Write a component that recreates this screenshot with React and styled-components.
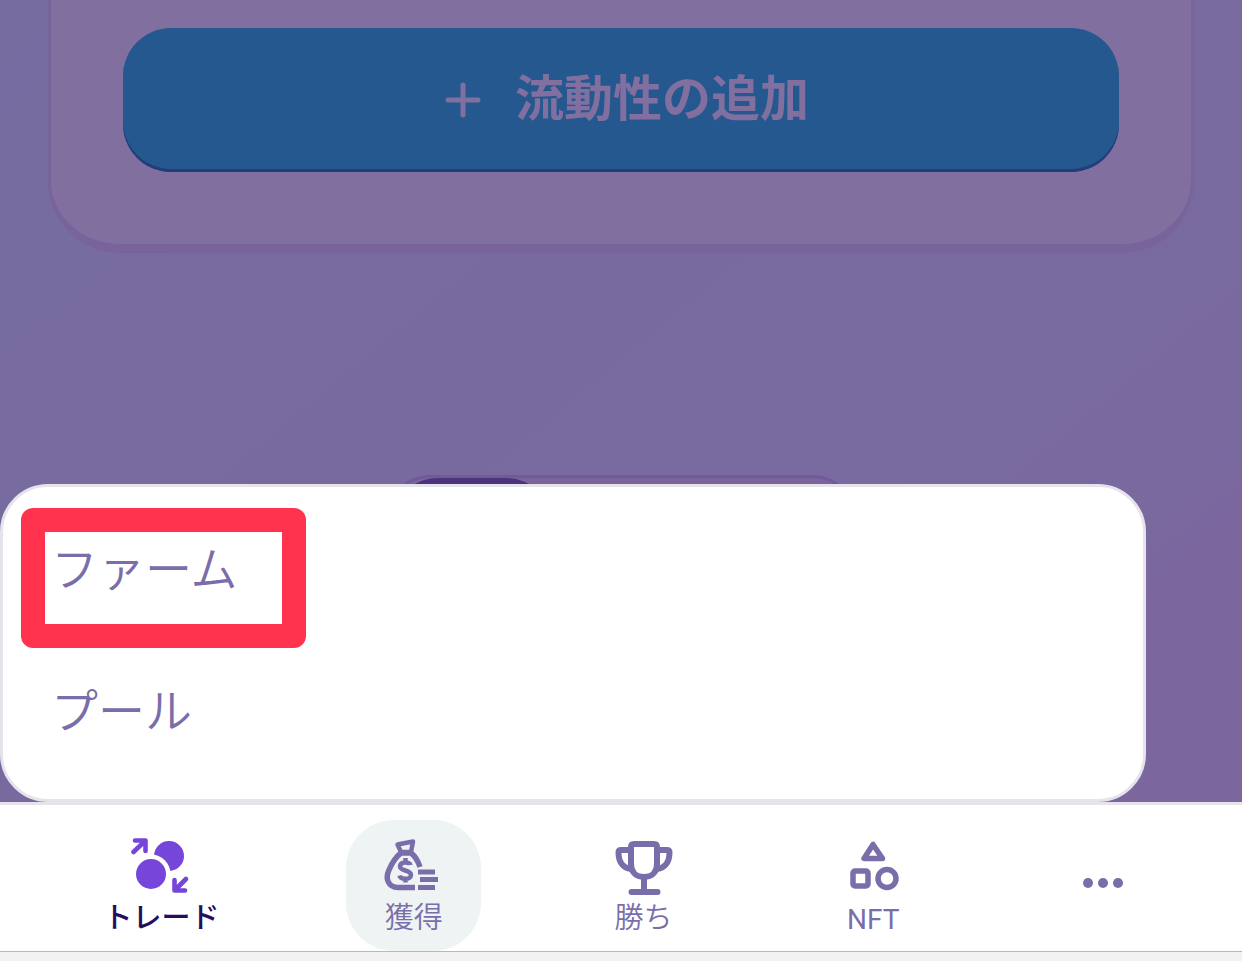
import React from 'react'
import styled, { createGlobalStyle } from 'styled-components'

const GlobalStyle = createGlobalStyle`
  * {
    box-sizing: border-box;
  }
  body {
    margin: 0;
    background: #f2f2f2;
    font-family: Roboto, 'Noto Sans CJK JP', sans-serif;
  }
`

function TradeIcon() {
  return (
    <Icon viewBox="0 0 60 60">
      <circle cx="38" cy="20" r="15" fill="currentColor" />
      <circle cx="20" cy="38" r="19.500" fill="#fff" />
      <circle cx="20" cy="38" r="15" fill="currentColor" />
      <path d="M2.500 16 14 5M4 4.500H14.500V15" fill="none" stroke="currentColor" strokeWidth="4.600" strokeLinejoin="round" strokeLinecap="round" />
      <path d="M55 43 44 54M43.500 44V54.500H54" fill="none" stroke="currentColor" strokeWidth="4.600" strokeLinejoin="round" strokeLinecap="round" />
    </Icon>
  )
}

function EarnIcon() {
  return (
    <Icon viewBox="0 0 60 60">
      <g fill="none" stroke="currentColor" strokeWidth="5.500" strokeLinejoin="round">
        <path d="M31 51.500H14C4 51.500 1 42 5 34 8 27 13 20 17 17H27C31 20 34 25 36 31" />
        <path d="M17 16 13.500 8.500 29 5.500 27 16Z" strokeWidth="4.500" />
        <path d="M26.500 29C26 25.500 16 25.500 16 30.500 16 35.500 27 33.500 27 39 27 44 16.500 44 15.500 39.500M21.500 22v5M21.500 42v4.500" strokeWidth="4.500" />
      </g>
      <path d="M34 33.500H51V38.500H34ZM36 41H54V46H36ZM34 49H51V54H34Z" fill="currentColor" />
    </Icon>
  )
}

function TrophyIcon() {
  return (
    <Icon viewBox="0 0 60 60">
      <g fill="none" stroke="currentColor" strokeWidth="6" strokeLinecap="round" strokeLinejoin="round">
        <path d="M17 11Q17 8 20 8H40Q43 8 43 11V28C43 36 38 41 30 41S17 36 17 28Z" />
        <path d="M16 14H7Q4.500 14 4.500 16.500C4.500 26 9 32 17 33M44 14H53Q55.500 14 55.500 16.500C55.500 26 51 32 43 33M30 42V55M17.500 56H43.500" />
      </g>
    </Icon>
  )
}

function NftIcon() {
  return (
    <Icon viewBox="0 0 60 60">
      <g fill="none" stroke="currentColor" strokeWidth="5.500" strokeLinejoin="round">
        <path d="M30 8.500 21 22.500H39.500Z" />
        <rect x="10" y="35" width="15" height="15" rx="2" />
        <circle cx="44" cy="42.500" r="9" />
      </g>
    </Icon>
  )
}

function MoreIcon() {
  return (
    <Icon viewBox="0 0 60 60">
      <g fill="currentColor">
        <circle cx="15" cy="30" r="5" />
        <circle cx="30" cy="30" r="5" />
        <circle cx="45" cy="30" r="5" />
      </g>
    </Icon>
  )
}

function App() {
  return (
    <Page>
      <GlobalStyle />
      <Content>
        <Card>
          <AddButton type="button">
            <Icon viewBox="0 0 60 60">
              <path d="M30 15V45M15 30H45" fill="none" stroke="currentColor" strokeWidth="5" strokeLinecap="round" />
            </Icon>
            <AddLabel>流動性の追加</AddLabel>
          </AddButton>
        </Card>
        <Toggle>
          <ToggleThumb />
        </Toggle>
        <SubMenu>
          <SubMenuLink href="#farms">
            <Marker>ファーム</Marker>
          </SubMenuLink>
          <SubMenuLink href="#pools">プール</SubMenuLink>
        </SubMenu>
      </Content>
      <BottomNav>
        <NavButton type="button" $active>
          <TradeIcon />
          <Label>トレード</Label>
        </NavButton>
        <NavButton type="button" $open>
          <EarnIcon />
          <Label>獲得</Label>
        </NavButton>
        <NavButton type="button">
          <TrophyIcon />
          <Label>勝ち</Label>
        </NavButton>
        <NavButton type="button">
          <NftIcon />
          <Label $latin>NFT</Label>
        </NavButton>
        <NavButton type="button" aria-label="More" $center>
          <MoreIcon />
        </NavButton>
      </BottomNav>
      <BrowserBar />
    </Page>
  )
}

export default App

const Page = styled.div`
  display: flex;
  flex-direction: column;
  min-height: 100vh;
`

const Content = styled.main`
  position: relative;
  flex: 1;
  display: flex;
  flex-direction: column;
  align-items: center;
  gap: 222px;
  padding: 0 48px;
  overflow: hidden;
  background: linear-gradient(140deg, #766ca0 0%, #786a9f 40%, #79699f 80%, #7b669e 84%);
`

const Card = styled.section`
  width: 100%;
  padding: 28px 72px 72px;
  border: 3px solid #79639b;
  border-top: 0;
  border-bottom-width: 9px;
  border-radius: 0 0 72px 72px;
  background: #816fa0;
`

const Icon = styled.svg`
  flex: none;
  width: 60px;
  height: 60px;
`

const AddButton = styled.button`
  display: flex;
  align-items: center;
  justify-content: center;
  gap: 22px;
  width: 100%;
  height: 144px;
  padding: 0;
  border: 0;
  border-radius: 48px;
  background: #25588f;
  box-shadow: inset 0 -3px 0 #243c78;
  color: #816fa0;
  font-family: inherit;
  font-size: 49px;
  font-weight: 700;
`

const AddLabel = styled.span`
  padding-bottom: 12px;
`

const Toggle = styled.div`
  width: 476px;
  height: 96px;
  padding-left: 4px;
  border: 3px solid #715a98;
  border-radius: 48px;
  background: #7a649c;
`

const ToggleThumb = styled.div`
  width: 164px;
  height: 96px;
  border-radius: 48px;
  background: #4b347b;
`

const SubMenu = styled.nav`
  position: absolute;
  left: 0;
  right: 96px;
  bottom: 0;
  display: flex;
  flex-direction: column;
  padding: 12px 0 16px;
  border: 3px solid #e6e3eb;
  border-radius: 48px;
  background: #fff;
`

const SubMenuLink = styled.a`
  display: flex;
  align-items: center;
  height: 142px;
  padding-left: 48px;
  color: #7a6eaa;
  font-size: 47px;
  font-weight: 350;
  line-height: 48px;
  text-decoration: none;
`

const Marker = styled.span`
  position: relative;

  &::after {
    content: '';
    position: absolute;
    top: -38px;
    left: -30px;
    width: 285px;
    height: 140px;
    box-sizing: border-box;
    border: 24px solid #ff334d;
    border-radius: 12px;
  }
`

const BottomNav = styled.nav`
  display: flex;
  justify-content: space-around;
  padding: 15px 24px 0;
  border-top: 3px solid #e6e3eb;
  background: #fff;
`

const NavButton = styled.button`
  display: flex;
  flex-direction: column;
  align-items: center;
  justify-content: ${props => (props.$center ? 'center' : 'flex-start')};
  min-width: 135px;
  height: 131px;
  padding: ${props => (props.$center ? '0 32px 6px' : '16px 32px 0')};
  border: 0;
  border-radius: 48px;
  background: ${props => (props.$open ? '#eef3f4' : 'transparent')};
  color: ${props => (props.$active ? '#7645d9' : '#7a6eaa')};
  font-family: inherit;
  font-weight: ${props => (props.$active ? 500 : 350)};

  ${props => props.$active && 'span { color: #280d5f; }'}
`

const Label = styled.span`
  font-size: ${props => (props.$latin ? '28px' : '29px')};
  font-weight: ${props => (props.$latin ? 400 : 'inherit')};
  line-height: ${props => (props.$latin ? '48px' : '44px')};
`

const BrowserBar = styled.footer`
  height: 10px;
  border-top: 1px solid #b8b8b8;
  background: #f2f2f2;
`
